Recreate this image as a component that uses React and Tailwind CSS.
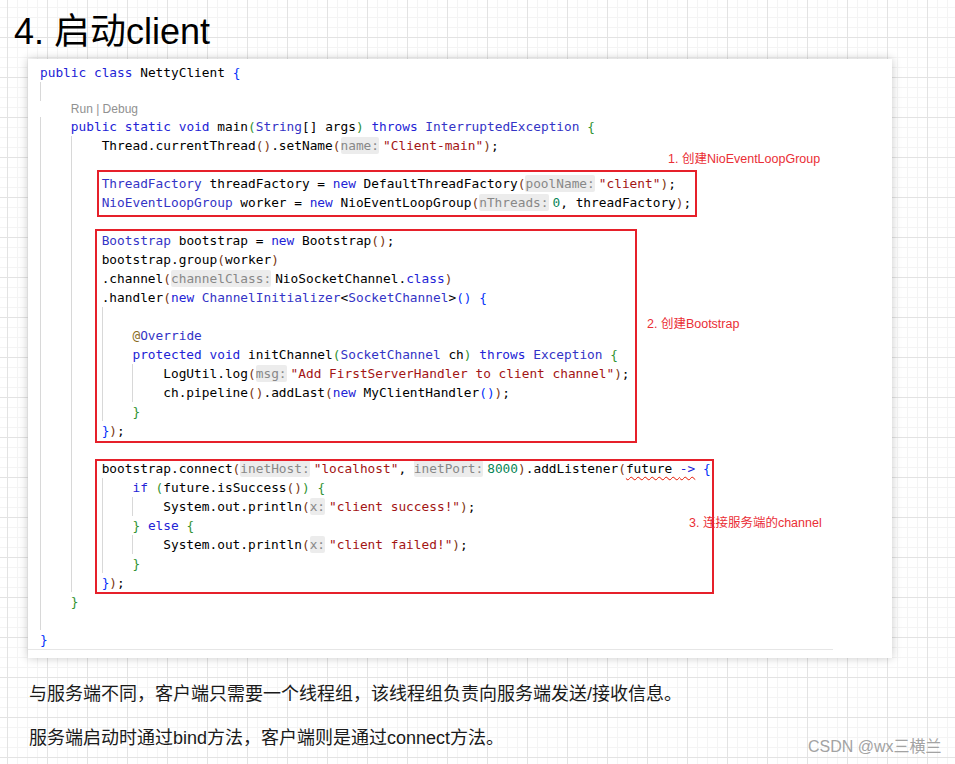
import React from "react";

const KW = "text-[#2323d6]";
const TY = "text-[#3434c6]";
const STR = "text-[#a31515]";
const NUM = "text-[#098658]";
const B1 = "text-[#0431fa]";
const B2 = "text-[#319331]";
const B3 = "text-[#7b3814]";
const AT = "text-[#8a6d1e]";

function H({ children }) {
  return (
    <span className="bg-[#ececec] text-[#888888] rounded-[2px] py-[1px] mr-[4px]">{children}</span>
  );
}

function T({ c, children }) {
  return <span className={c}>{children}</span>;
}

function Line({ indent = 0, children }) {
  return (
    <div className="flex h-[19px] leading-[19px]">
      {Array.from({ length: indent }).map((_, i) => (
        <span key={i} className="w-[4ch] shrink-0 border-l border-[#d8d8d8]" />
      ))}
      <span className="whitespace-pre">{children}</span>
    </div>
  );
}

export default function App() {
  return (
    <div className="relative w-[955px] h-[764px] overflow-hidden bg-white bg-[linear-gradient(to_right,#e3e3e3_1px,transparent_1px),linear-gradient(to_bottom,#e3e3e3_1px,transparent_1px),linear-gradient(to_right,#f4f4f4_1px,transparent_1px),linear-gradient(to_bottom,#f4f4f4_1px,transparent_1px)] bg-[size:40px_40px,40px_40px,10px_10px,10px_10px] bg-[position:7px_37px] font-['Liberation_Sans','Noto_Sans_CJK_SC',sans-serif] text-black">
      <div className="pl-[14px] pt-[12px] text-[36px] leading-[40px]">4. 启动client</div>

      <div className="relative ml-[28px] mt-[7px] w-[864px] h-[599px] bg-white shadow-[0_0_9px_rgba(0,0,0,0.22)]">
        <div className="pt-[4px] pl-[12px] font-['DejaVu_Sans_Mono',monospace] text-[12.8px] text-black">
          <Line>
            <T c={KW}>public</T> <T c={KW}>class</T> NettyClient <T c={B1}>{"{"}</T>
          </Line>
          <Line indent={1}></Line>
          <div className="flex h-[16px] leading-[16px]">
            <span className="w-[4ch] shrink-0" />
            <span className="font-['Liberation_Sans',sans-serif] text-[12px] text-[#919191]">Run | Debug</span>
          </div>
          <Line indent={1}>
            <T c={KW}>public</T> <T c={KW}>static</T> <T c={KW}>void</T> main<T c={B2}>(</T>
            <T c={TY}>String</T>[] args<T c={B2}>)</T> <T c={KW}>throws</T> <T c={TY}>InterruptedException</T>{" "}
            <T c={B2}>{"{"}</T>
          </Line>
          <Line indent={2}>
            Thread.currentThread<T c={B3}>()</T>.setName<T c={B3}>(</T>
            <H>name:</H>
            <T c={STR}>"Client-main"</T>
            <T c={B3}>)</T>;
          </Line>
          <Line indent={2}></Line>
          <Line indent={2}>
            <T c={TY}>ThreadFactory</T> threadFactory = <T c={KW}>new</T> DefaultThreadFactory<T c={B3}>(</T>
            <H>poolName:</H>
            <T c={STR}>"client"</T>
            <T c={B3}>)</T>;
          </Line>
          <Line indent={2}>
            <T c={TY}>NioEventLoopGroup</T> worker = <T c={KW}>new</T> NioEventLoopGroup<T c={B3}>(</T>
            <H>nThreads:</H>
            <T c={NUM}>0</T>, threadFactory<T c={B3}>)</T>;
          </Line>
          <Line indent={2}></Line>
          <Line indent={2}>
            <T c={TY}>Bootstrap</T> bootstrap = <T c={KW}>new</T> Bootstrap<T c={B3}>()</T>;
          </Line>
          <Line indent={2}>
            bootstrap.group<T c={B3}>(</T>worker<T c={B3}>)</T>
          </Line>
          <Line indent={2}>
            .channel<T c={B3}>(</T>
            <H>channelClass:</H>
            NioSocketChannel.<T c={KW}>class</T>
            <T c={B3}>)</T>
          </Line>
          <Line indent={2}>
            .handler<T c={B3}>(</T>
            <T c={KW}>new</T> <T c={TY}>ChannelInitializer</T>&lt;<T c={TY}>SocketChannel</T>&gt;<T c={B1}>()</T>{" "}
            <T c={B1}>{"{"}</T>
          </Line>
          <Line indent={3}></Line>
          <Line indent={3}>
            <T c={AT}>@</T>
            <T c={TY}>Override</T>
          </Line>
          <Line indent={3}>
            <T c={KW}>protected</T> <T c={KW}>void</T> initChannel<T c={B2}>(</T>
            <T c={TY}>SocketChannel</T> ch<T c={B2}>)</T> <T c={KW}>throws</T> <T c={TY}>Exception</T>{" "}
            <T c={B2}>{"{"}</T>
          </Line>
          <Line indent={4}>
            LogUtil.log<T c={B3}>(</T>
            <H>msg:</H>
            <T c={STR}>"Add FirstServerHandler to client channel"</T>
            <T c={B3}>)</T>;
          </Line>
          <Line indent={4}>
            ch.pipeline<T c={B3}>()</T>.addLast<T c={B3}>(</T>
            <T c={KW}>new</T> MyClientHandler<T c={B1}>()</T>
            <T c={B3}>)</T>;
          </Line>
          <Line indent={3}>
            <T c={B2}>{"}"}</T>
          </Line>
          <Line indent={2}>
            <T c={B1}>{"}"}</T>
            <T c={B3}>)</T>;
          </Line>
          <Line indent={2}></Line>
          <Line indent={2}>
            bootstrap.connect<T c={B3}>(</T>
            <H>inetHost:</H>
            <T c={STR}>"localhost"</T>, <H>inetPort:</H>
            <T c={NUM}>8000</T>
            <T c={B3}>)</T>.addListener<T c={B3}>(</T>
            <span className="underline decoration-wavy decoration-[#e51400] decoration-1 underline-offset-[3px]">
              future <T c={KW}>-&gt;</T>
            </span>{" "}
            <T c={B1}>{"{"}</T>
          </Line>
          <Line indent={3}>
            <T c={KW}>if</T> <T c={B2}>(</T>future.isSuccess<T c={B3}>()</T>
            <T c={B2}>)</T> <T c={B2}>{"{"}</T>
          </Line>
          <Line indent={4}>
            System.out.println<T c={B3}>(</T>
            <H>x:</H>
            <T c={STR}>"client success!"</T>
            <T c={B3}>)</T>;
          </Line>
          <Line indent={3}>
            <T c={B2}>{"}"}</T> <T c={KW}>else</T> <T c={B2}>{"{"}</T>
          </Line>
          <Line indent={4}>
            System.out.println<T c={B3}>(</T>
            <H>x:</H>
            <T c={STR}>"client failed!"</T>
            <T c={B3}>)</T>;
          </Line>
          <Line indent={3}>
            <T c={B2}>{"}"}</T>
          </Line>
          <Line indent={2}>
            <T c={B1}>{"}"}</T>
            <T c={B3}>)</T>;
          </Line>
          <Line indent={1}>
            <T c={B2}>{"}"}</T>
          </Line>
          <Line indent={1}></Line>
          <Line>
            <T c={B1}>{"}"}</T>
          </Line>
        </div>
        <div className="h-px w-[805px] bg-[#e6e6e6]" />

        <div className="absolute left-[69px] top-[111px] w-[600px] h-[47px] border-2 border-[#e6202a]" />
        <div className="absolute left-[67px] top-[170px] w-[542px] h-[214px] border-2 border-[#e6202a]" />
        <div className="absolute left-[67px] top-[400px] w-[619px] h-[135px] border-2 border-[#e6202a]" />

        <div className="absolute left-[640px] top-[92px] text-[12.5px] leading-[16px] text-[#ea2e36] whitespace-nowrap">1. 创建NioEventLoopGroup</div>
        <div className="absolute left-[619px] top-[257px] text-[12.5px] leading-[16px] text-[#ea2e36] whitespace-nowrap">2. 创建Bootstrap</div>
        <div className="absolute left-[661px] top-[456px] text-[12.5px] leading-[16px] text-[#ea2e36] whitespace-nowrap">3. 连接服务端的channel</div>
      </div>

      <div className="pl-[29px] mt-[23px] text-[18px] leading-[26px] text-[#1a1a1a]">
        与服务端不同，客户端只需要一个线程组，该线程组负责向服务端发送/接收信息。
      </div>
      <div className="pl-[29px] mt-[18px] text-[18px] leading-[26px] text-[#1a1a1a]">
        服务端启动时通过bind方法，客户端则是通过connect方法。
      </div>

      <div className="absolute left-[808px] top-[738px] text-[16px] leading-[18px] text-[#a3a3a3] whitespace-nowrap">CSDN @wx三横兰</div>
    </div>
  );
}
